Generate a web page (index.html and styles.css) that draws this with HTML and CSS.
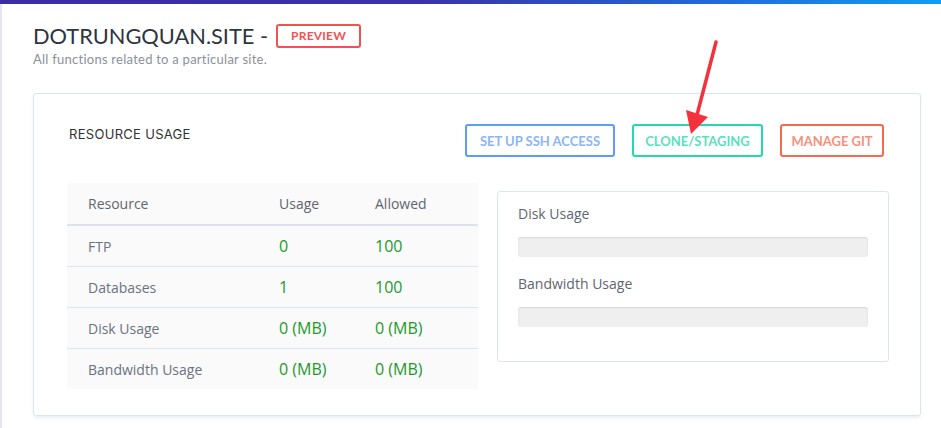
FILE: index.html
```html
<!DOCTYPE html>
<html lang="en">
<head>
  <meta charset="UTF-8" />
  <meta name="viewport" content="width=device-width, initial-scale=1.0"/>
  <title>dotrungquan.site - Preview</title>
  <link rel="stylesheet" href="styles.css">
</head>
<body>
  <div class="topbar"></div>
  <div class="layout">
    <div class="side-edge"></div>
    <main class="main">
      <div class="page-head">
        <h1 class="page-title">DOTRUNGQUAN.SITE - <span class="badge">PREVIEW</span></h1>
        <p class="page-sub">All functions related to a particular site.</p>
      </div>

      <section class="card">
        <div class="card-head">
          <h2 class="card-title">RESOURCE USAGE</h2>
          <div class="actions">
            <button class="btn btn-blue">SET UP SSH ACCESS</button>
            <button class="btn btn-green">CLONE/STAGING</button>
            <button class="btn btn-red">MANAGE GIT</button>
          </div>
        </div>

        <div class="card-body">
          <table class="usage-table">
            <thead>
              <tr>
                <th class="col-name">Resource</th>
                <th class="col-usage">Usage</th>
                <th>Allowed</th>
              </tr>
            </thead>
            <tbody>
              <tr>
                <td>FTP</td>
                <td class="val">0</td>
                <td class="val">100</td>
              </tr>
              <tr>
                <td>Databases</td>
                <td class="val">1</td>
                <td class="val">100</td>
              </tr>
              <tr>
                <td>Disk Usage</td>
                <td class="val">0 (MB)</td>
                <td class="val">0 (MB)</td>
              </tr>
              <tr>
                <td>Bandwidth Usage</td>
                <td class="val">0 (MB)</td>
                <td class="val">0 (MB)</td>
              </tr>
            </tbody>
          </table>

          <div class="meters">
            <div class="meter-label">Disk Usage</div>
            <div class="meter"><div class="meter-fill" style="width: 0%"></div></div>
            <div class="meter-label">Bandwidth Usage</div>
            <div class="meter"><div class="meter-fill" style="width: 0%"></div></div>
          </div>
        </div>
      </section>
    </main>
  </div>

  <!-- annotation arrow drawn over the page -->
  <svg class="arrow" width="941" height="428" viewBox="0 0 941 428">
    <line x1="716" y1="42" x2="697" y2="115" stroke="#f4323d" stroke-width="3.5" stroke-linecap="round"/>
    <polygon points="686,110 708,117 691,134" fill="#f4323d"/>
  </svg>
</body>
</html>
```

FILE: styles.css
```css
html, body {
  margin: 0;
  padding: 0;
}
body {
  background: #fff;
  font-family: "Open Sans", Arial, sans-serif;
  width: 941px;
  height: 428px;
  overflow: hidden;
  position: relative;
}
.topbar {
  height: 4px;
  background: linear-gradient(90deg, #3a2ea0 0%, #3a33a6 45%, #2168d6 75%, #129cf0 100%);
}
.layout {
  display: flex;
  height: 424px;
}
.side-edge {
  width: 2px;
  background: #e6e6f1;
  flex-shrink: 0;
}
.main {
  flex: 1;
  padding: 17px 20px 0 31px;
}
.page-title {
  margin: 0;
  font-family: "Lato", Arial, sans-serif;
  font-weight: 400;
  font-size: 21.8px;
  line-height: 30px;
  color: #2e3440;
  display: flex;
  align-items: center;
}
.badge {
  margin-left: 8px;
  border: 2px solid #f25252;
  border-radius: 3px;
  color: #f25252;
  font-size: 12px;
  font-weight: 700;
  line-height: 20px;
  padding: 0 13px;
  letter-spacing: 0.2px;
}
.page-sub {
  margin: 0;
  font-family: "Lato", Arial, sans-serif;
  font-size: 13px;
  letter-spacing: 0.25px;
  color: #8b909a;
  line-height: 16px;
}
.card {
  margin-top: 26px;
  border: 1px solid #dce5ee;
  border-radius: 3px;
  box-shadow: 0 2px 3px rgba(180, 195, 215, 0.25);
  padding: 30px 31px 26px 33px;
  height: 265px;
}
.card-head {
  display: flex;
  justify-content: space-between;
  align-items: flex-start;
  padding: 0 5px 0 2px;
}
.card-title {
  margin: 2px 0 0;
  font-family: "Inter", Arial, sans-serif;
  font-weight: 400;
  font-size: 13px;
  color: #333;
  letter-spacing: 0.3px;
}
.actions {
  display: flex;
  gap: 17px;
}
.btn {
  font-family: "Lato", Arial, sans-serif;
  font-weight: 700;
  font-size: 13px;
  height: 33px;
  padding: 0 8px;
  background: #fff;
  border: 2px solid;
  border-radius: 3px;
  cursor: pointer;
}
.btn-blue {
  border-color: #5e9cf6;
  color: #8db5f6;
  width: 150px;
}
.btn-green {
  border-color: #27d8ae;
  color: #5ddfbf;
  width: 131px;
}
.btn-red {
  border-color: #f46b52;
  color: #f5917c;
  width: 104px;
}
.card-body {
  margin-top: 26px;
  display: grid;
  grid-template-columns: 411px 392px;
  column-gap: 19px;
  align-items: start;
}
.usage-table {
  border-collapse: collapse;
  table-layout: fixed;
  background: #fafafa;
  width: 100%;
  font-size: 14px;
  color: #6b7280;
}
.usage-table th {
  text-align: left;
  font-weight: 400;
  color: #5f6670;
  height: 41px;
  padding: 0 0 0 21px;
  border-bottom: 2px solid #dde3ea;
}
.usage-table td {
  height: 40px;
  padding: 0 0 0 21px;
  border-top: 1px solid #dde5ee;
}
.usage-table tbody tr:first-child td {
  border-top: none;
}
.usage-table .col-name {
  width: 170px;
}
.usage-table .col-usage {
  width: 75px;
}
.usage-table .val {
  color: #1a9a2c;
  font-size: 16px;
}
.meters {
  margin-top: 8px;
  border: 1px solid #dfe5ec;
  border-radius: 3px;
  padding: 12px 20px 34px;
}
.meter-label {
  font-size: 14px;
  line-height: 20px;
  color: #5f6670;
}
.meter {
  margin: 13px 0 17px;
  height: 20px;
  background: #efefef;
  border-radius: 3px;
  box-shadow: inset 0 1px 2px rgba(0, 0, 0, 0.1);
  overflow: hidden;
}
.meter:last-child {
  margin-bottom: 0;
}
.meter-fill {
  height: 100%;
  background: #3c8dbc;
}
.arrow {
  position: absolute;
  left: 0;
  top: 0;
  pointer-events: none;
}
```
